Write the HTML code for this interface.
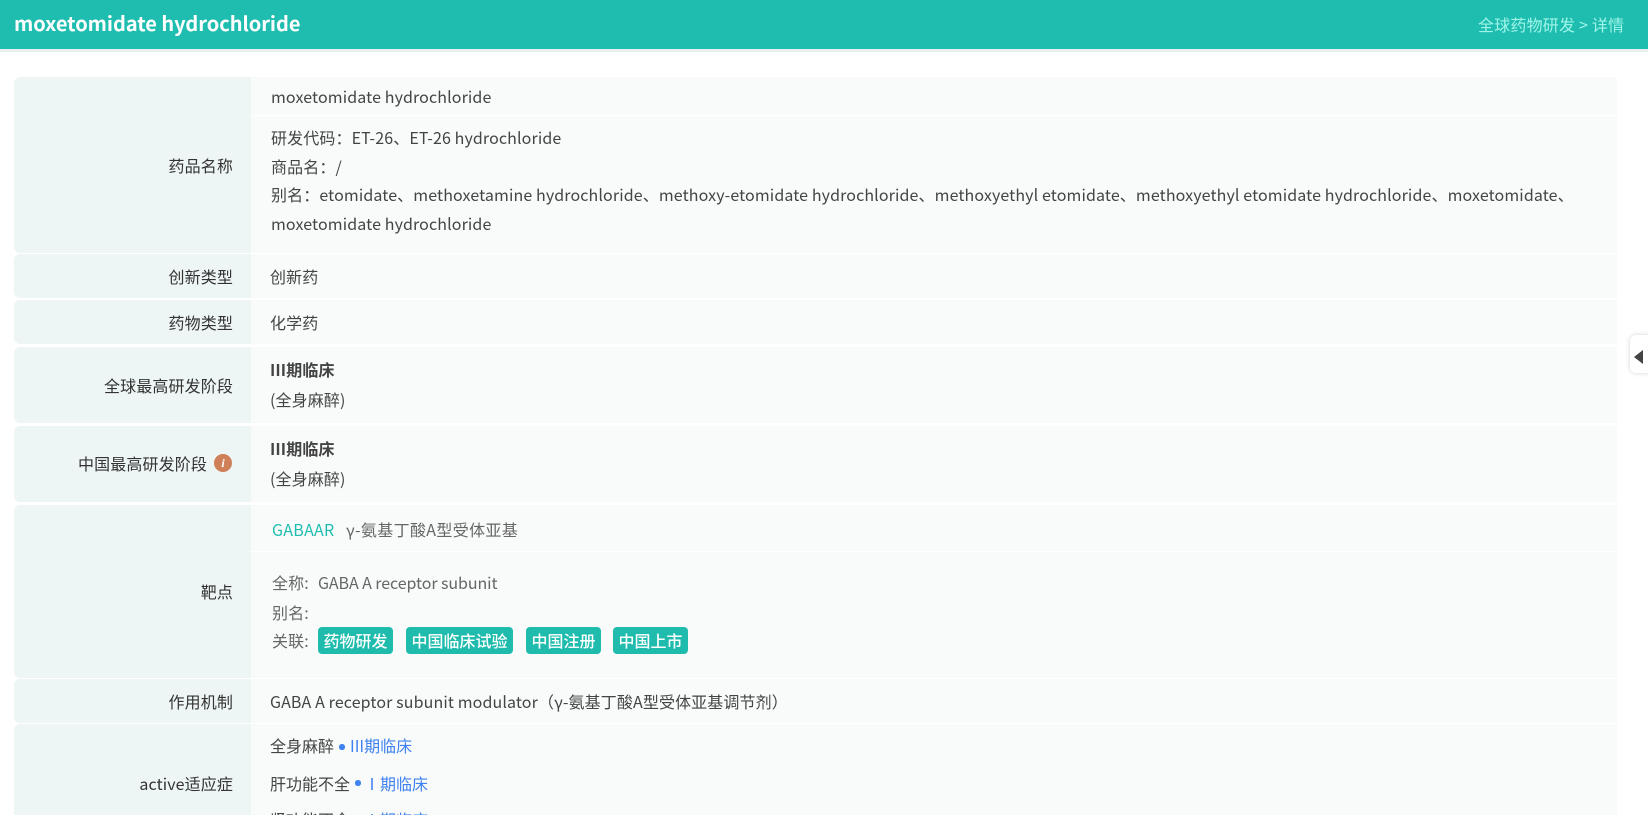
<!DOCTYPE html>
<html lang="zh-CN"><head><meta charset="utf-8"><title>moxetomidate hydrochloride</title>
<style>
html,body{margin:0;padding:0;width:1648px;height:815px;overflow:hidden;background:#fff}
body{position:relative;font-family:"Noto Sans CJK SC","Liberation Sans",sans-serif;font-size:16px;color:#444}
.b{position:absolute}
.t{position:absolute;line-height:28px;height:28px;white-space:nowrap;letter-spacing:.12px}
.l{left:14px;width:237px;background:#eef6f5;border-radius:6px 0 0 6px;position:absolute}
.v{left:251px;width:1366px;background:#f9fbfb;position:absolute}
.lb{position:absolute;right:1415px;line-height:28px;white-space:nowrap;color:#333;letter-spacing:.12px}
.tag{position:absolute;top:627px;height:27px;line-height:27px;background:#1fbcae;color:#fff;border-radius:4px;text-align:center;font-weight:500}
.g{color:#666}
.bl{color:#3f82f0}
.dot{position:absolute;width:5.5px;height:5.5px;border-radius:50%;background:#3f82f0}
</style></head><body>
<div class="b" style="left:0;top:0;width:1648px;height:49px;background:#1fbdaf"></div>
<div class="b" style="left:0;top:49px;width:1648px;height:3px;background:#e9eeee"></div>
<div class="t" style="left:14px;top:9px;font-size:20px;font-weight:700;color:#fff;letter-spacing:-.03px">moxetomidate hydrochloride</div>
<div class="t" style="left:1478px;top:10px;color:#9ff5e8;letter-spacing:.2px">全球药物研发 &gt; 详情</div>

<div class="l" style="top:77px;height:176px"></div>
<div class="v" style="top:77px;height:38px"></div>
<div class="v" style="top:116px;height:137px"></div>
<div class="l" style="top:254px;height:44px"></div><div class="v" style="top:254px;height:44px"></div>
<div class="l" style="top:300px;height:44px"></div><div class="v" style="top:300px;height:44px"></div>
<div class="l" style="top:347px;height:76px"></div><div class="v" style="top:347px;height:76px"></div>
<div class="l" style="top:426px;height:76px"></div><div class="v" style="top:426px;height:76px"></div>
<div class="l" style="top:505px;height:173px"></div>
<div class="v" style="top:505px;height:46px"></div>
<div class="v" style="top:552px;height:126px"></div>
<div class="l" style="top:679px;height:44px"></div><div class="v" style="top:679px;height:44px"></div>
<div class="l" style="top:724px;height:100px"></div><div class="v" style="top:724px;height:100px"></div>

<div class="lb" style="top:151px">药品名称</div>
<div class="lb" style="top:262px">创新类型</div>
<div class="lb" style="top:308px">药物类型</div>
<div class="lb" style="top:371px">全球最高研发阶段</div>
<div class="lb" style="top:449px;right:1441px">中国最高研发阶段</div>
<div class="b" style="left:214px;top:454px;width:18px;height:18px;border-radius:50%;background:#cf8058;color:#fff;font:italic 700 12px/18px 'Liberation Serif',serif;text-align:center">i</div>
<div class="lb" style="top:577px">靶点</div>
<div class="lb" style="top:687px">作用机制</div>
<div class="lb" style="top:769px">active适应症</div>

<div class="t" style="left:271px;top:82px">moxetomidate hydrochloride</div>
<div class="t" style="left:271px;top:123px">研发代码：ET-26、ET-26 hydrochloride</div>
<div class="t" style="left:271px;top:152px">商品名：/</div>
<div class="t" style="left:271px;top:180px">别名：etomidate、methoxetamine hydrochloride、methoxy-etomidate hydrochloride、methoxyethyl etomidate、methoxyethyl etomidate hydrochloride、moxetomidate、</div>
<div class="t" style="left:271px;top:209px">moxetomidate hydrochloride</div>
<div class="t" style="left:270px;top:262px">创新药</div>
<div class="t" style="left:270px;top:308px">化学药</div>
<div class="t" style="left:270px;top:355px;font-weight:700">III期临床</div>
<div class="t" style="left:270px;top:385px">(全身麻醉)</div>
<div class="t" style="left:270px;top:434px;font-weight:700">III期临床</div>
<div class="t" style="left:270px;top:464px">(全身麻醉)</div>
<div class="t" style="left:272px;top:515px;color:#1fbdaf;letter-spacing:.3px">GABAAR</div>
<div class="t g" style="left:346px;top:515px;letter-spacing:.35px">γ-氨基丁酸A型受体亚基</div>
<div class="t g" style="left:272px;top:568px">全称:</div>
<div class="t g" style="left:318px;top:568px;letter-spacing:-.08px">GABA A receptor subunit</div>
<div class="t g" style="left:272px;top:598px">别名:</div>
<div class="t g" style="left:272px;top:626px">关联:</div>
<div class="tag" style="left:318px;width:75px">药物研发</div>
<div class="tag" style="left:406px;width:107px">中国临床试验</div>
<div class="tag" style="left:526px;width:75px">中国注册</div>
<div class="tag" style="left:613px;width:75px">中国上市</div>
<div class="t" style="left:270px;top:687px">GABA A receptor subunit modulator（γ-氨基丁酸A型受体亚基调节剂）</div>
<div class="t" style="left:270px;top:731px;letter-spacing:0">全身麻醉</div>
<div class="dot" style="left:339px;top:744px"></div>
<div class="t bl" style="left:350px;top:731px;letter-spacing:0">III期临床</div>
<div class="t" style="left:270px;top:769px;letter-spacing:0">肝功能不全</div>
<div class="dot" style="left:355px;top:780px"></div>
<div class="t bl" style="left:364px;top:769px;letter-spacing:0">Ⅰ期临床</div>
<div class="t" style="left:270px;top:805px;letter-spacing:0">肾功能不全</div>
<div class="dot" style="left:355px;top:816px"></div>
<div class="t bl" style="left:364px;top:805px;letter-spacing:0">Ⅰ期临床</div>

<div class="b" style="left:1630px;top:335px;width:25px;height:38px;background:#fff;border-radius:6px 0 0 6px;box-shadow:0 0 5px rgba(0,0,0,.18)"></div>
<div class="b" style="left:1634px;top:350px;width:0;height:0;border-style:solid;border-width:7px 9px 7px 0;border-color:transparent #444 transparent transparent"></div>
</body></html>
